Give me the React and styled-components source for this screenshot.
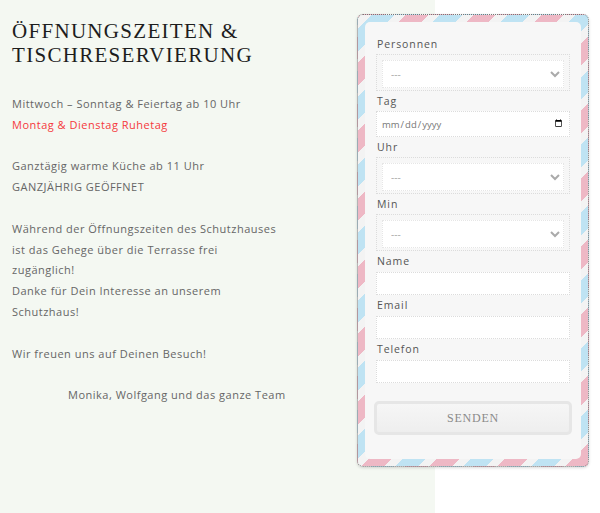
import React from "react";
import styled, { createGlobalStyle } from "styled-components";

const Global = createGlobalStyle`
  html, body { margin: 0; padding: 0; }
  body {
    background: linear-gradient(to right, #f4f8f2 0, #f4f8f2 435px, #ffffff 435px);
    min-height: 513px;
    font-family: "Open Sans", "Noto Sans", sans-serif;
  }
`;

const Page = styled.div`
  display: flex;
  align-items: flex-start;
  justify-content: space-between;
  padding: 14px 11px 0 12px;
  min-height: 499px;
`;

const Info = styled.section`
  width: 330px;
  padding-top: 5px;
`;

const Heading = styled.h1`
  margin: 0 0 27px;
  font-family: "Liberation Serif", "Times New Roman", serif;
  font-weight: 400;
  font-size: 21px;
  line-height: 24px;
  letter-spacing: 1.3px;
  color: #1d1d1d;
  text-transform: uppercase;
`;

const Para = styled.p`
  margin: 0 0 20.8px;
  font-size: 11px;
  line-height: 20.8px;
  letter-spacing: 0.5px;
  color: #666;
  padding-left: ${(p) => p.$indent || 0}px;
`;

const Red = styled.span`
  color: #f5393c;
`;

const Envelope = styled.div`
  width: 216px;
  padding: 7px;
  border: 1px dotted #777;
  border-radius: 6px;
  background: repeating-linear-gradient(
    -45deg,
    #eeb8c5 0 16px,
    #f3f3f3 16px 24px,
    #bfe3f3 24px 40px,
    #f3f3f3 40px 48px
  );
  box-shadow: 0 1px 3px rgba(0, 0, 0, 0.15);
`;

const Panel = styled.form`
  background: #f7f7f7;
  border-radius: 5px;
  padding: 15px 11px 24px 11px;
  display: flex;
  flex-direction: column;
`;

const Label = styled.label`
  font-size: 10.5px;
  letter-spacing: 0.9px;
  color: #555;
  line-height: 14px;
  padding-left: 1px;
  margin-bottom: ${(p) => p.$mb || 3}px;
`;

const SelectWrap = styled.div`
  border: 1px dotted #dcdcdc;
  padding: 5px 5px 2px;
  margin-bottom: 3px;
`;

const Select = styled.select`
  width: 100%;
  height: 28px;
  border: 1px dotted #e6e6e6;
  background: #fff;
  color: #aaa;
  font-size: 10px;
  padding: 0 4px;
  font-family: "Open Sans", sans-serif;
  outline: none;
`;

const Input = styled.input`
  box-sizing: border-box;
  width: 100%;
  height: ${(p) => p.$h || 23}px;
  border: 1px dotted #dcdcdc;
  background: #fff;
  font-size: 9.5px;
  color: #777;
  padding: 0 4px;
  margin-bottom: 3px;
  font-family: "Open Sans", sans-serif;
  outline: none;
`;

const Button = styled.button`
  margin: 15px -2px 0;
  height: 34px;
  border: 3px solid #e6e6e6;
  border-radius: 5px;
  background: linear-gradient(#f6f6f6, #eeeeee);
  font-family: "Liberation Serif", "Times New Roman", serif;
  font-size: 12px;
  letter-spacing: 0.8px;
  color: #8a8a8a;
  cursor: pointer;
`;

export default function App() {
  return (
    <>
      <Global />
      <Page>
        <Info>
          <Heading>
            Öffnungszeiten &amp;
            <br />
            Tischreservierung
          </Heading>
          <Para>
            Mittwoch – Sonntag &amp; Feiertag ab 10 Uhr
            <br />
            <Red>Montag &amp; Dienstag Ruhetag</Red>
          </Para>
          <Para>
            Ganztägig warme Küche ab 11 Uhr
            <br />
            GANZJÄHRIG GEÖFFNET
          </Para>
          <Para>
            Während der Öffnungszeiten des Schutzhauses
            <br />
            ist das Gehege über die Terrasse frei
            <br />
            zugänglich!
            <br />
            Danke für Dein Interesse an unserem
            <br />
            Schutzhaus!
          </Para>
          <Para>Wir freuen uns auf Deinen Besuch!</Para>
          <Para $indent={56}>Monika, Wolfgang und das ganze Team</Para>
        </Info>
        <Envelope>
          <Panel onSubmit={(e) => e.preventDefault()}>
            <Label>Personnen</Label>
            <SelectWrap>
              <Select defaultValue="">
                <option value="">---</option>
              </Select>
            </SelectWrap>
            <Label>Tag</Label>
            <Input type="date" $h={26} />
            <Label>Uhr</Label>
            <SelectWrap>
              <Select defaultValue="">
                <option value="">---</option>
              </Select>
            </SelectWrap>
            <Label>Min</Label>
            <SelectWrap>
              <Select defaultValue="">
                <option value="">---</option>
              </Select>
            </SelectWrap>
            <Label $mb={4}>Name</Label>
            <Input type="text" />
            <Label $mb={4}>Email</Label>
            <Input type="email" />
            <Label $mb={4}>Telefon</Label>
            <Input type="tel" />
            <Button type="submit">SENDEN</Button>
          </Panel>
        </Envelope>
      </Page>
    </>
  );
}
